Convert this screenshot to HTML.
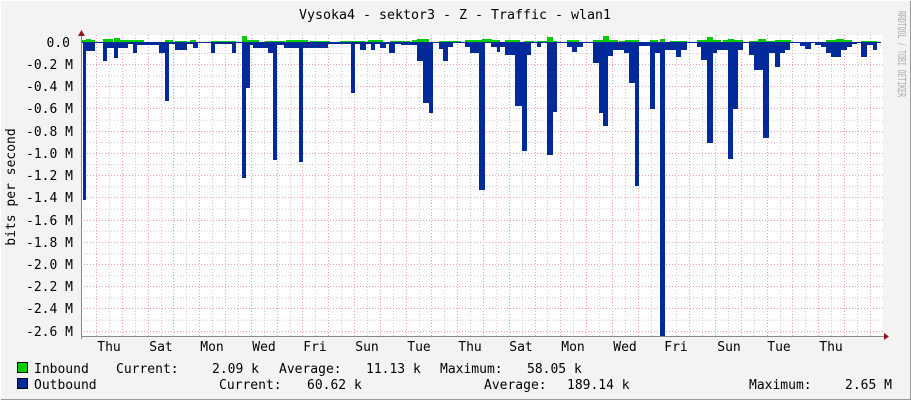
<!DOCTYPE html>
<html><head><meta charset="utf-8"><style>
html,body{margin:0;padding:0;background:#f3f3f3}
svg{display:block}
text{font-family:"DejaVu Sans Mono","Liberation Mono",monospace;font-size:13px;fill:#000}
</style></head><body>
<svg width="911" height="400" viewBox="0 0 911 400" xmlns="http://www.w3.org/2000/svg">
<rect x="0" y="0" width="911" height="400" fill="#f3f3f3"/>
<line x1="910.5" y1="0" x2="910.5" y2="400" stroke="#999"/>
<line x1="0" y1="399.5" x2="911" y2="399.5" stroke="#999"/>
<line x1="0" y1="0.5" x2="911" y2="0.5" stroke="#fff"/>
<line x1="0.5" y1="0" x2="0.5" y2="400" stroke="#fff"/>
<rect x="81" y="35" width="802" height="301" fill="#fff"/>
<g stroke-width="1" stroke-dasharray="1,2">
<g stroke="#ccc">
<path d="M81 53.5H883M81 75.7H883M81 97.9H883M81 120.2H883M81 142.4H883M81 164.6H883M81 186.8H883M81 209H883M81 231.3H883M81 253.5H883M81 275.7H883M81 297.9H883M81 320.1H883"/>
<path d="M109.5 35V336M135.5 35V336M161.5 35V336M186.5 35V336M212.5 35V336M238.5 35V336M264.5 35V336M290.5 35V336M315.5 35V336M341.5 35V336M367.5 35V336M393.5 35V336M419.5 35V336M444.5 35V336M470.5 35V336M496.5 35V336M522.5 35V336M547.5 35V336M573.5 35V336M599.5 35V336M625.5 35V336M651.5 35V336M676.5 35V336M702.5 35V336M728.5 35V336M754.5 35V336M780.5 35V336M805.5 35V336M831.5 35V336M857.5 35V336"/>
</g>
<g stroke="#f0a0a0">
<path d="M81 64.5H883M81 86.5H883M81 108.5H883M81 131.5H883M81 153.5H883M81 175.5H883M81 197.5H883M81 220.5H883M81 242.5H883M81 264.5H883M81 286.5H883M81 308.5H883M81 331.5H883"/>
<path d="M96.5 35V336M122.5 35V336M148.5 35V336M173.5 35V336M199.5 35V336M225.5 35V336M251.5 35V336M277.5 35V336M302.5 35V336M328.5 35V336M354.5 35V336M380.5 35V336M406.5 35V336M431.5 35V336M457.5 35V336M483.5 35V336M509.5 35V336M535.5 35V336M560.5 35V336M586.5 35V336M612.5 35V336M638.5 35V336M664.5 35V336M689.5 35V336M715.5 35V336M741.5 35V336M767.5 35V336M792.5 35V336M818.5 35V336M844.5 35V336M870.5 35V336"/>
</g>
</g>
<g fill="#00cc00">
<rect x="81" y="40" width="14" height="2"/><rect x="86" y="39" width="5" height="3"/>
<rect x="103" y="39" width="10" height="3"/><rect x="114" y="38" width="6" height="4"/>
<rect x="120" y="40" width="24" height="2"/><rect x="134" y="40" width="6" height="2"/>
<rect x="165" y="40" width="8" height="2"/><rect x="175" y="41" width="12" height="1"/>
<rect x="190" y="40" width="6" height="2"/><rect x="211" y="41" width="25" height="1"/>
<rect x="242" y="36" width="5" height="6"/><rect x="247" y="40" width="12" height="2"/>
<rect x="265" y="41" width="20" height="1"/><rect x="286" y="40" width="22" height="2"/>
<rect x="310" y="41" width="20" height="1"/><rect x="340" y="41" width="25" height="1"/>
<rect x="368" y="40" width="15" height="2"/><rect x="390" y="41" width="20" height="1"/>
<rect x="412" y="40" width="10" height="2"/><rect x="417" y="39" width="12" height="3"/>
<rect x="439" y="41" width="22" height="1"/><rect x="465" y="40" width="35" height="2"/>
<rect x="482" y="39" width="10" height="3"/><rect x="505" y="40" width="15" height="2"/>
<rect x="524" y="41" width="10" height="1"/><rect x="537" y="41" width="20" height="1"/>
<rect x="547" y="37" width="6" height="5"/><rect x="567" y="40" width="12" height="2"/>
<rect x="593" y="40" width="25" height="2"/><rect x="603" y="36" width="6" height="6"/>
<rect x="619" y="41" width="20" height="1"/><rect x="625" y="40" width="14" height="2"/>
<rect x="650" y="40" width="8" height="2"/><rect x="660" y="39" width="5" height="3"/>
<rect x="670" y="41" width="17" height="1"/><rect x="697" y="40" width="24" height="2"/>
<rect x="707" y="37" width="6" height="5"/><rect x="723" y="40" width="20" height="2"/>
<rect x="728" y="39" width="6" height="3"/><rect x="749" y="41" width="28" height="1"/>
<rect x="758" y="39" width="8" height="3"/><rect x="775" y="40" width="16" height="2"/>
<rect x="826" y="40" width="26" height="2"/><rect x="836" y="39" width="8" height="3"/>
<rect x="861" y="41" width="16" height="1"/>
</g>
<g fill="#002a9a">
<rect x="81" y="42" width="800" height="1"/>
<rect x="83" y="42" width="3" height="158"/><rect x="86" y="42" width="9" height="9"/>
<rect x="103" y="42" width="4" height="19"/><rect x="107" y="42" width="3" height="6"/>
<rect x="110" y="42" width="4" height="6"/><rect x="114" y="42" width="4" height="16"/>
<rect x="118" y="42" width="10" height="6"/><rect x="128" y="42" width="5" height="2"/>
<rect x="133" y="42" width="4" height="11"/><rect x="137" y="42" width="4" height="3"/>
<rect x="141" y="42" width="14" height="3"/><rect x="155" y="42" width="4" height="3"/>
<rect x="159" y="42" width="6" height="11"/><rect x="165" y="42" width="4" height="59"/>
<rect x="169" y="42" width="6" height="2"/><rect x="175" y="42" width="12" height="8"/>
<rect x="187" y="42" width="6" height="2"/><rect x="193" y="42" width="5" height="6"/>
<rect x="211" y="42" width="4" height="11"/><rect x="215" y="42" width="17" height="2"/>
<rect x="232" y="42" width="4" height="11"/><rect x="242" y="42" width="4" height="136"/>
<rect x="246" y="42" width="4" height="46"/><rect x="250" y="42" width="3" height="3"/>
<rect x="253" y="42" width="15" height="6"/><rect x="268" y="42" width="5" height="11"/>
<rect x="273" y="42" width="4" height="118"/><rect x="277" y="42" width="7" height="3"/>
<rect x="284" y="42" width="15" height="6"/><rect x="299" y="42" width="4" height="120"/>
<rect x="303" y="42" width="25" height="6"/><rect x="328" y="42" width="23" height="2"/>
<rect x="351" y="42" width="4" height="51"/><rect x="355" y="42" width="5" height="2"/>
<rect x="360" y="42" width="6" height="8"/><rect x="366" y="42" width="5" height="2"/>
<rect x="371" y="42" width="4" height="8"/><rect x="375" y="42" width="5" height="2"/>
<rect x="380" y="42" width="6" height="6"/><rect x="386" y="42" width="3" height="2"/>
<rect x="389" y="42" width="6" height="11"/><rect x="395" y="42" width="6" height="2"/>
<rect x="401" y="42" width="16" height="3"/><rect x="417" y="42" width="6" height="19"/>
<rect x="423" y="42" width="6" height="61"/><rect x="429" y="42" width="4" height="71"/>
<rect x="439" y="42" width="4" height="7"/><rect x="443" y="42" width="5" height="19"/>
<rect x="448" y="42" width="5" height="5"/><rect x="465" y="42" width="5" height="5"/>
<rect x="470" y="42" width="9" height="11"/><rect x="479" y="42" width="6" height="148"/>
<rect x="491" y="42" width="6" height="5"/><rect x="497" y="42" width="3" height="10"/>
<rect x="500" y="42" width="5" height="5"/><rect x="505" y="42" width="10" height="13"/>
<rect x="515" y="42" width="7" height="64"/><rect x="522" y="42" width="5" height="109"/>
<rect x="527" y="42" width="4" height="13"/><rect x="537" y="42" width="4" height="5"/>
<rect x="547" y="42" width="6" height="113"/><rect x="553" y="42" width="4" height="70"/>
<rect x="567" y="42" width="5" height="5"/><rect x="572" y="42" width="5" height="10"/>
<rect x="577" y="42" width="6" height="5"/><rect x="593" y="42" width="6" height="21"/>
<rect x="599" y="42" width="4" height="71"/><rect x="603" y="42" width="5" height="84"/>
<rect x="608" y="42" width="5" height="14"/><rect x="613" y="42" width="11" height="8"/>
<rect x="624" y="42" width="5" height="11"/><rect x="629" y="42" width="6" height="41"/>
<rect x="635" y="42" width="4" height="144"/><rect x="639" y="42" width="11" height="4"/>
<rect x="650" y="42" width="5" height="67"/><rect x="655" y="42" width="5" height="11"/>
<rect x="660" y="42" width="5" height="294"/><rect x="665" y="42" width="11" height="8"/>
<rect x="676" y="42" width="5" height="15"/><rect x="681" y="42" width="6" height="8"/>
<rect x="697" y="42" width="4" height="5"/><rect x="701" y="42" width="6" height="18"/>
<rect x="707" y="42" width="6" height="101"/><rect x="713" y="42" width="4" height="11"/>
<rect x="717" y="42" width="11" height="8"/><rect x="728" y="42" width="5" height="117"/>
<rect x="733" y="42" width="5" height="67"/><rect x="738" y="42" width="5" height="8"/>
<rect x="749" y="42" width="5" height="13"/><rect x="754" y="42" width="9" height="28"/>
<rect x="763" y="42" width="6" height="96"/><rect x="769" y="42" width="6" height="11"/>
<rect x="775" y="42" width="5" height="25"/><rect x="780" y="42" width="5" height="11"/>
<rect x="785" y="42" width="5" height="8"/><rect x="800" y="42" width="5" height="4"/>
<rect x="805" y="42" width="6" height="7"/><rect x="815" y="42" width="6" height="3"/>
<rect x="821" y="42" width="5" height="5"/><rect x="826" y="42" width="5" height="11"/>
<rect x="831" y="42" width="10" height="15"/><rect x="841" y="42" width="6" height="8"/>
<rect x="847" y="42" width="5" height="5"/><rect x="852" y="42" width="5" height="2"/>
<rect x="861" y="42" width="6" height="15"/><rect x="867" y="42" width="6" height="3"/>
<rect x="873" y="42" width="4" height="8"/>
</g>
<line x1="81" y1="336.5" x2="886" y2="336.5" stroke="#888"/>
<line x1="81.5" y1="32" x2="81.5" y2="339" stroke="#888"/>
<polygon points="884,333 889,336.5 884,340" fill="#8b1a1a"/>
<polygon points="78,36 81.5,30 85,36" fill="#8b1a1a"/>
<g>
<text x="455" y="19" text-anchor="middle" textLength="312" lengthAdjust="spacingAndGlyphs">Vysoka4 - sektor3 - Z - Traffic - wlan1</text>
<g text-anchor="end">
<text x="70" y="47">0.0</text><text x="73" y="69">-0.2 M</text><text x="73" y="91">-0.4 M</text>
<text x="73" y="113">-0.6 M</text><text x="73" y="136">-0.8 M</text><text x="73" y="158">-1.0 M</text>
<text x="73" y="180">-1.2 M</text><text x="73" y="202">-1.4 M</text><text x="73" y="225">-1.6 M</text>
<text x="73" y="247">-1.8 M</text><text x="73" y="269">-2.0 M</text><text x="73" y="291">-2.2 M</text>
<text x="73" y="313">-2.4 M</text><text x="73" y="336">-2.6 M</text>
</g>
<g text-anchor="middle">
<text x="109" y="351">Thu</text><text x="161" y="351">Sat</text><text x="212" y="351">Mon</text>
<text x="264" y="351">Wed</text><text x="315" y="351">Fri</text><text x="367" y="351">Sun</text>
<text x="419" y="351">Tue</text><text x="470" y="351">Thu</text><text x="521" y="351">Sat</text>
<text x="573" y="351">Mon</text><text x="625" y="351">Wed</text><text x="676" y="351">Fri</text>
<text x="729" y="351">Sun</text><text x="779" y="351">Tue</text><text x="831" y="351">Thu</text>
</g>
<text transform="translate(15,187) rotate(-90)" text-anchor="middle">bits per second</text>
<text transform="translate(898,11) rotate(90)" style="font-size:11px;fill:#aaa" textLength="86" lengthAdjust="spacingAndGlyphs">RRDTOOL / TOBI OETIKER</text>
<rect x="17.5" y="362.5" width="10" height="10" fill="#00cc00" stroke="#000"/>
<rect x="17.5" y="378.5" width="10" height="10" fill="#002a9a" stroke="#000"/>
<text x="34" y="373">Inbound</text>
<text x="116" y="373">Current:</text>
<text x="212" y="373">2.09 k</text>
<text x="279" y="373">Average:</text>
<text x="366" y="373">11.13 k</text>
<text x="440" y="373">Maximum:</text>
<text x="527" y="373">58.05 k</text>
<text x="34" y="389">Outbound</text>
<text x="219" y="389">Current:</text>
<text x="307" y="389">60.62 k</text>
<text x="484" y="389">Average:</text>
<text x="567" y="389">189.14 k</text>
<text x="749" y="389">Maximum:</text>
<text x="845" y="389">2.65 M</text>
</g>
</svg>
</body></html>
